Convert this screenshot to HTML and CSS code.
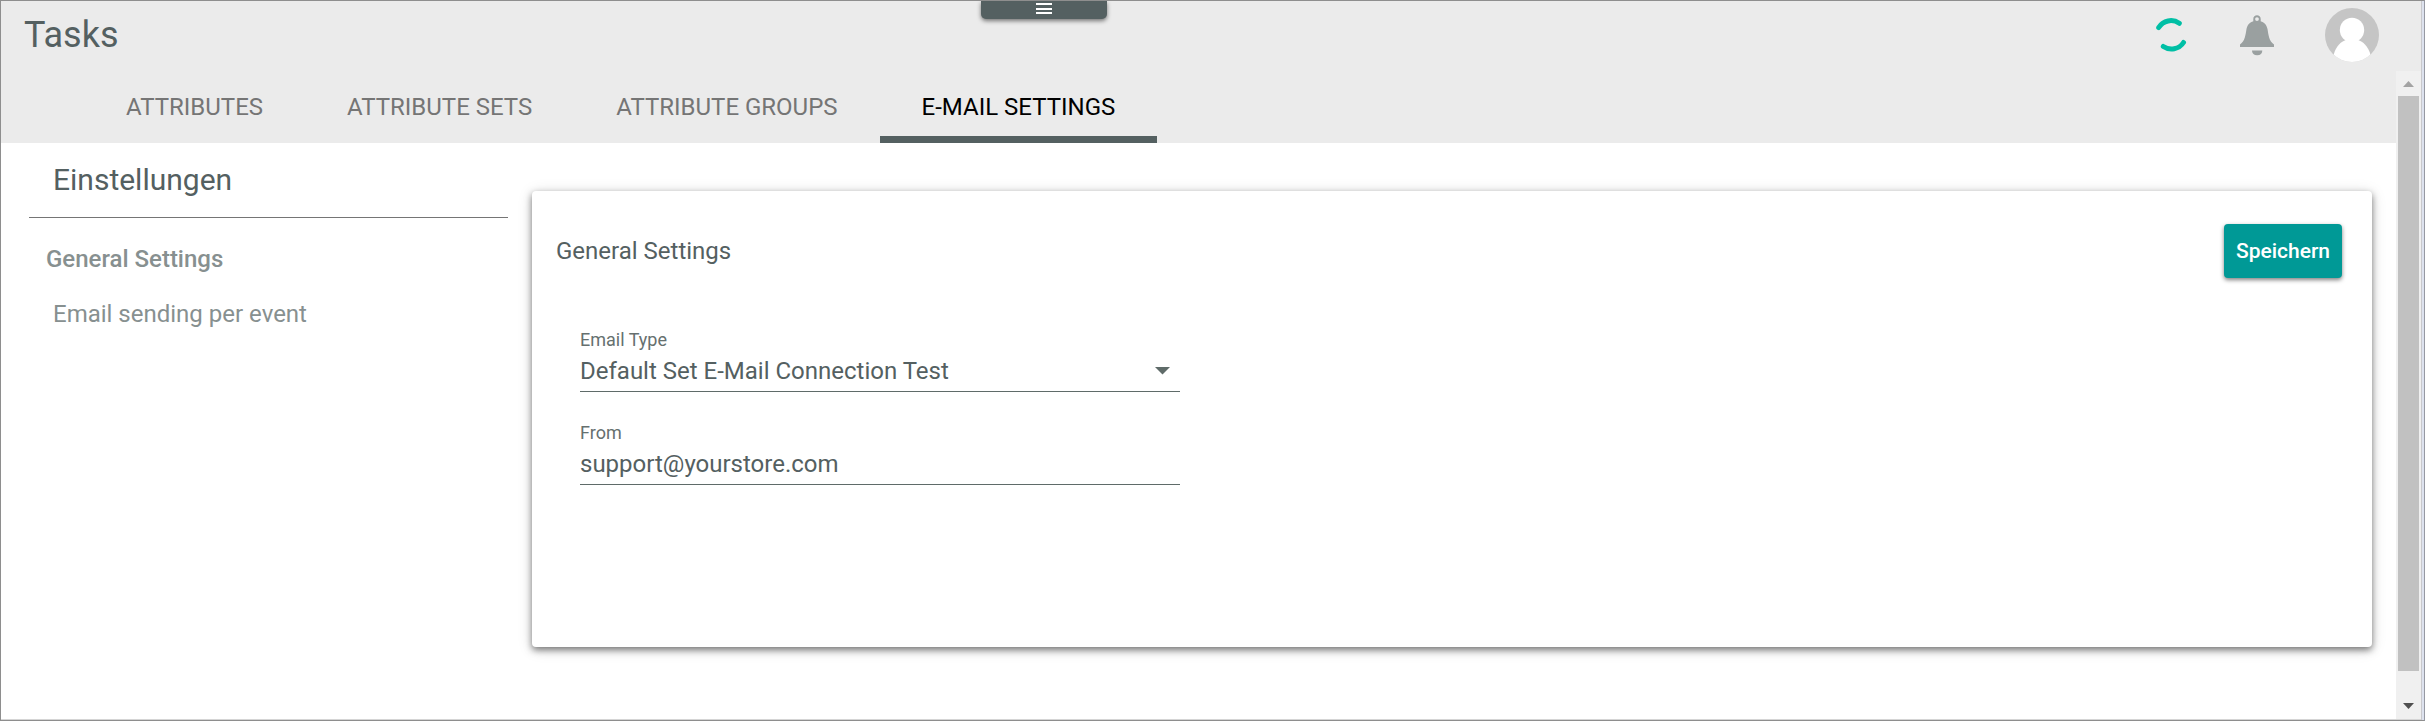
FILE: index.html
```html
<!DOCTYPE html>
<html lang="de">
<head>
<meta charset="utf-8">
<title>Tasks</title>
<link rel="stylesheet" href="styles.css">
</head>
<body>
<div class="window">
  <header class="header">
    <div class="topbar">
      <h1 class="page-title">Tasks</h1>
      <div class="actions">
        <svg class="sync" viewBox="0 0 32 36" width="32" height="36"><path d="M2.700 10.500A14.400 14.400 0 0 1 23.300 6.300M7.300 29.500A14.400 14.400 0 0 0 27.500 25.500" fill="none" stroke="#00bfa5" stroke-width="5" stroke-linecap="round"/></svg>
        <svg class="bell" viewBox="0 0 34 42" width="34" height="42"><path fill-rule="evenodd" fill="#9aa0a0" d="M0 32V29.500C5 26 5.500 20 6.500 14C7.500 9.500 10 7.500 13.300 6.300V4C13.300 1.500 15 .3 17 .3S20.700 1.500 20.700 4V6.300C24 7.500 26.500 9.500 27.500 14C28.500 20 29 26 34 29.500V32ZM17 2.200A1.900 1.900 0 1 0 17 6A1.900 1.900 0 1 0 17 2.200Z"/><path fill="#9aa0a0" d="M12 35.400H22.300C22.300 38.500 20.500 40.200 17.200 40.200S12 38.500 12 35.400Z"/></svg>
        <svg class="avatar" viewBox="0 0 54 54" width="54" height="54"><defs><clipPath id="disc"><circle cx="27" cy="27" r="27"/></clipPath></defs><g clip-path="url(#disc)"><rect width="54" height="54" fill="#c5c5c5"/><circle cx="27" cy="22" r="12.200" fill="#fff"/><path d="M8.600 47C11 38 16 33.500 21 32H33C38 33.500 43 38 45.600 47L40 54H14Z" fill="#fff"/></g></svg>
      </div>
    </div>
    <nav class="tabs">
      <a class="tab">ATTRIBUTES</a>
      <a class="tab">ATTRIBUTE SETS</a>
      <a class="tab">ATTRIBUTE GROUPS</a>
      <a class="tab active">E-MAIL SETTINGS</a>
    </nav>
    <div class="drawer-handle"><i></i><i></i><i></i></div>
  </header>
  <main class="content">
    <aside class="sidebar">
      <h2 class="sidebar-title">Einstellungen</h2>
      <a class="side-link selected">General Settings</a>
      <a class="side-link">Email sending per event</a>
    </aside>
    <section class="card">
      <div class="card-head">
        <h3 class="card-title">General Settings</h3>
        <button class="save">Speichern</button>
      </div>
      <div class="field">
        <span class="label">Email Type</span>
        <div class="value">Default Set E-Mail Connection Test<svg class="caret" viewBox="0 0 15 8" width="15" height="8"><path d="M0 0H15L7.500 7.500Z" fill="#5f6b69"/></svg></div>
      </div>
      <div class="field">
        <span class="label">From</span>
        <div class="value">support@yourstore.com</div>
      </div>
    </section>
  </main>
  <div class="scrollbar">
    <svg viewBox="0 0 11 6" width="11" height="6"><path d="M0 6L5.500 0L11 6Z" fill="#a3a3a3"/></svg>
    <div class="thumb"></div>
    <svg viewBox="0 0 11 6" width="11" height="6"><path d="M0 0H11L5.500 6Z" fill="#505050"/></svg>
  </div>
</div>
</body>
</html>
```

FILE: styles.css
```css
* { box-sizing: border-box; }
body { margin: 0; font-family: Roboto, sans-serif; color: #546061; background: #fff; }
h1, h2, h3 { margin: 0; font-weight: 400; }
svg { display: block; }
.window { position: relative; width: 2425px; height: 721px; border: 1px solid #8e8e8e; border-right-color: #9699a3; box-shadow: inset -2px 0 #dde2ee, inset -3px 0 #c8c8cc, inset 0 -1px #d5d5d5; overflow: hidden; }
.header { position: relative; width: 2420px; height: 142px; background: #ebebeb; }
.topbar { display: flex; justify-content: space-between; height: 70px; padding: 0 42px 0 23px; }
.page-title { font-size: 36px; line-height: 42px; padding-top: 13px; }
.actions { display: flex; align-items: flex-start; }
.sync { margin: 16px 52px 0 0; overflow: visible; }
.bell { margin: 14px 51px 0 0; }
.avatar { margin-top: 7px; }
.tabs { display: flex; height: 72px; padding-left: 83px; }
.tab { padding: 0 42px; font-size: 24px; line-height: 72px; color: #757575; height: 72px; }
.tab.active { color: #000; box-shadow: inset 0 -7px #546061; }
.drawer-handle { position: absolute; left: 980px; top: 0; width: 126px; height: 18px; display: flex; flex-direction: column; align-items: center; gap: 2.500px; padding-top: 2px; background: #546061; border-radius: 0 0 5px 5px; box-shadow: 0 2px 4px rgba(0,0,0,.5); }
.drawer-handle i { width: 16px; height: 2px; background: #fff; flex: none; }
.content { display: flex; height: 577px; }
.sidebar { width: 479px; margin-left: 28px; display: flex; flex-direction: column; }
.sidebar-title { height: 75px; padding: 19px 0 0 24px; font-size: 30px; line-height: 36px; border-bottom: 1px solid #757575; }
.side-link { font-size: 24px; line-height: 28px; color: #879090; padding-left: 24px; margin-top: 27px; }
.selected { padding-left: 17px; font-weight: 500; }
.card { width: 1840px; height: 456px; margin: 48px 0 0 24px; background: #fff; border-radius: 4px; box-shadow: 0 3px 7px rgba(0,0,0,.5), 0 2px 16px rgba(0,0,0,.12); padding: 33px 30px 0 24px; }
.card-head { display: flex; justify-content: space-between; align-items: center; height: 54px; }
.card-title { font-size: 24px; line-height: 28px; }
.save { width: 118px; height: 54px; padding: 0; border: 0; border-radius: 4px; background: #009996; color: #fff; font: 500 21px/54px Roboto, sans-serif; box-shadow: 0 2px 4px rgba(0,0,0,.5); }
.field { width: 600px; margin-left: 24px; height: 93px; border-bottom: 1px solid #5f6b69; display: flex; flex-direction: column; justify-content: flex-end; }
.card-head + .field { height: 114px; }
.label { font-size: 18px; line-height: 21px; color: #66706f; }
.value { display: flex; align-items: center; justify-content: space-between; font-size: 24px; line-height: 28px; padding: 7px 10px 6px 0; }
.scrollbar { position: absolute; left: 2395px; top: 70px; width: 25px; height: 648px; background: #f0f0f0; display: flex; flex-direction: column; align-items: center; padding: 10px 0; }
.thumb { width: 21px; height: 575px; background: #c1c1c1; margin: 9px 0 32px; flex: none; }
.scrollbar svg { flex: none; }
```
